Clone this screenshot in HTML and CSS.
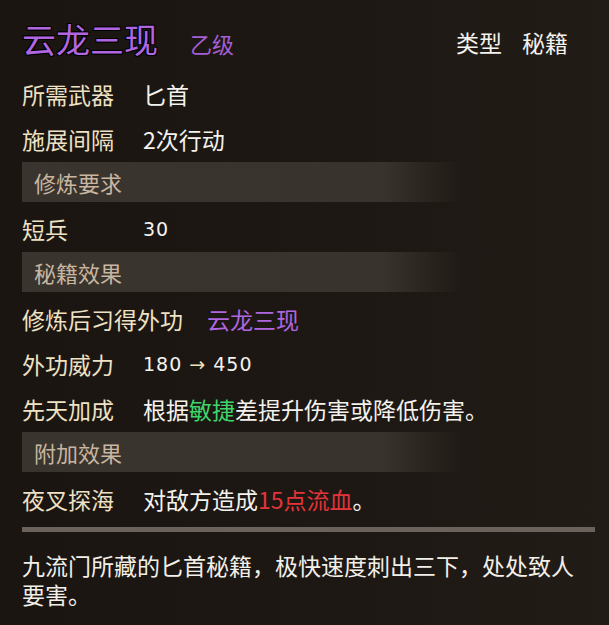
FILE: index.html
```html
<!DOCTYPE html>
<html lang="zh-CN">
<head>
    <meta charset="UTF-8">
    <meta name="viewport" content="width=device-width, initial-scale=1.0">
    <title>云龙三现</title>
    <link rel="stylesheet" href="styles.css">
</head>
<body>
    <div id="card">
        <div class="header">
            <div class="title-group">
                <span class="title">云龙三现</span>
                <span class="grade">乙级</span>
            </div>
            <div class="type">
                <span>类型</span>
                <span>秘籍</span>
            </div>
        </div>

        <div class="row">
            <span class="label">所需武器</span>
            <span class="value">匕首</span>
        </div>
        <div class="row">
            <span class="label">施展间隔</span>
            <span class="value">2次行动</span>
        </div>

        <div class="section">修炼要求</div>
        <div class="row">
            <span class="label">短兵</span>
            <span class="value num">30</span>
        </div>

        <div class="section">秘籍效果</div>
        <div class="row">
            <span class="label">修炼后习得外功</span>
            <span class="value skill">云龙三现</span>
        </div>
        <div class="row">
            <span class="label">外功威力</span>
            <span class="value num">180 <span class="arrow">→</span> 450</span>
        </div>
        <div class="row">
            <span class="label">先天加成</span>
            <span class="value">根据<span class="green">敏捷</span>差提升伤害或降低伤害。</span>
        </div>

        <div class="section">附加效果</div>
        <div class="row">
            <span class="label">夜叉探海</span>
            <span class="value">对敌方造成<span class="red">15点流血</span>。</span>
        </div>

        <div class="divider"></div>

        <p class="desc">九流门所藏的匕首秘籍，极快速度刺出三下，处处致人要害。</p>
    </div>
</body>
</html>
```

FILE: styles.css
```css
body {
    margin: 0;
    background-color: #1b1611;
    font-family: "Noto Sans CJK SC", "Noto Sans", sans-serif;
    color: #f2efe9;
}

#card {
    width: 609px;
    height: 625px;
    padding: 0 14px 0 22px;
    box-sizing: border-box;
    display: flex;
    flex-direction: column;
    background: linear-gradient(to right, #1a1510 0%, #1d1813 60%, #221c17 100%);
}

.header {
    height: 71px;
    display: flex;
    align-items: center;
    justify-content: space-between;
    padding-top: 6px;
    box-sizing: border-box;
}

.title-group {
    display: flex;
    align-items: baseline;
}

.title {
    font-size: 34px;
    color: #b066e0;
    text-shadow: 1px 1px 0 #000, -1px -1px 0 #000, 1px -1px 0 #000, -1px 1px 0 #000;
}

.grade {
    font-size: 22px;
    color: #a45fd6;
    margin-left: 32px;
}

.type {
    display: flex;
    gap: 20px;
    font-size: 23px;
    color: #f4f2ee;
    margin-right: 27px;
    padding-top: 6px;
}

.row {
    height: 45px;
    display: flex;
    align-items: center;
    font-size: 23px;
}

.label {
    color: #eee1c4;
    min-width: 121px;
}

.value {
    color: #f4f2ee;
}

.num {
    font-family: "DejaVu Sans", sans-serif;
    font-size: 19px;
    letter-spacing: 1px;
}

.arrow {
    color: #efe2b8;
}

.skill {
    color: #b066e0;
    margin-left: 24px;
}

.green {
    color: #3fd46a;
}

.red {
    color: #e3343a;
}

.section {
    height: 40px;
    margin: 1px 0 4px;
    width: 440px;
    padding-left: 12px;
    box-sizing: border-box;
    display: flex;
    align-items: center;
    font-size: 22px;
    color: #c8b6a0;
    background: linear-gradient(to right, #3a342e 0%, #39332d 82%, rgba(40, 34, 29, 0) 100%);
}

.divider {
    height: 5px;
    margin-top: 6px;
    background-color: #6b635b;
}

.desc {
    margin: 19px 0 0;
    font-size: 23px;
    line-height: 29px;
    color: #f2efe9;
    max-width: 562px;
}
```
